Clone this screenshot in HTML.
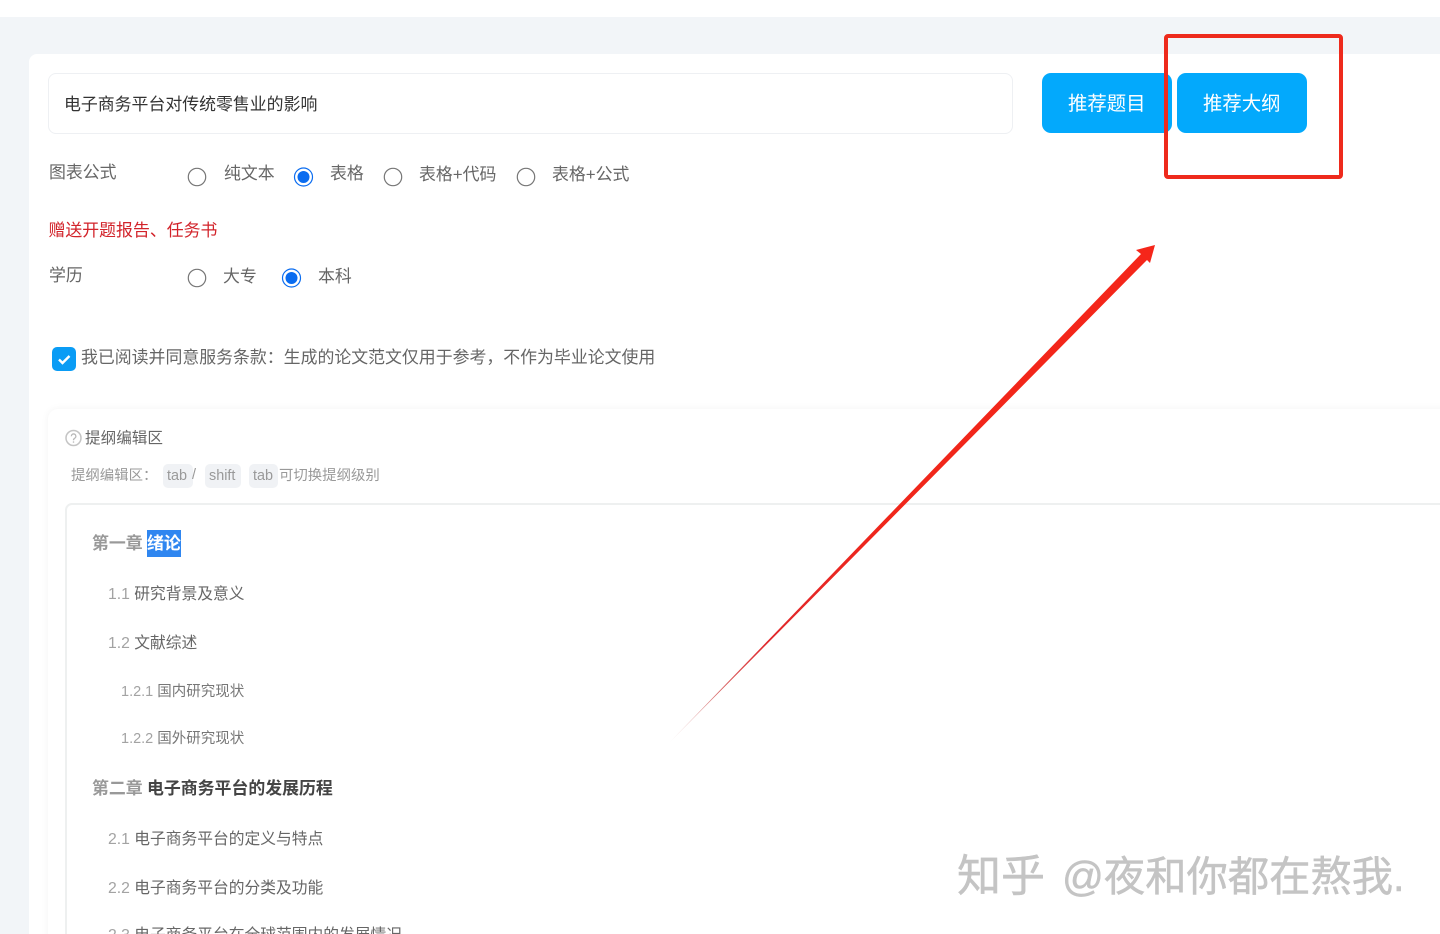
<!DOCTYPE html>
<html lang="zh">
<head>
<meta charset="utf-8">
<title>提纲编辑</title>
<style>
html,body{margin:0;padding:0;width:1440px;height:934px;overflow:hidden;background:#fff}
body{position:relative;font-family:"Liberation Sans","Noto Sans CJK SC",sans-serif;color:#555}
.a{position:absolute;box-sizing:border-box}
.t{position:absolute;white-space:nowrap;line-height:20px;height:20px}
.l{font-size:16.9px;color:#666}
.m{font-size:15.75px;color:#666}
.s{font-size:14.5px;color:#777}
.n{color:#a3a3a3}
.tag{position:absolute;top:464px;height:24px;background:#f0f2f5;border-radius:5px}
.g{font-size:14.4px;color:#999}
.w{height:44px;line-height:44px;color:#c4c4c4;-webkit-text-stroke:.5px #c4c4c4}
</style>
</head>
<body>
<div class="a" style="left:0;top:17px;width:1440px;height:917px;background:#f2f5f8"></div>
<div class="a" style="left:29px;top:54px;width:1411px;height:880px;background:#fff;border-radius:8px 0 0 0"></div>

<div class="a" style="left:48px;top:73px;width:965px;height:61px;border:1px solid #eef0f3;border-radius:8px"></div>
<div class="t" style="left:64px;top:95px;font-size:16.9px;color:#333">电子商务平台对传统零售业的影响</div>

<div class="a" style="left:1042px;top:73px;width:130px;height:60px;background:#03a9fc;border-radius:9px"></div>
<div class="a" style="left:1177px;top:73px;width:130px;height:60px;background:#03a9fc;border-radius:9px"></div>
<div class="t" style="left:1068px;top:94px;font-size:19.4px;color:#fff">推荐题目</div>
<div class="t" style="left:1203px;top:94px;font-size:19.4px;color:#fff">推荐大纲</div>

<div class="t l" style="left:49px;top:163px">图表公式</div>
<div class="t l" style="left:224px;top:164px">纯文本</div>
<div class="t l" style="left:330px;top:164px">表格</div>
<div class="t l" style="left:419px;top:165px">表格+代码</div>
<div class="t l" style="left:552px;top:165px">表格+公式</div>
<div class="t l" style="left:48.500px;top:221px;color:#d2232a">赠送开题报告、任务书</div>
<div class="t l" style="left:49px;top:266px">学历</div>
<div class="t l" style="left:223px;top:267px">大专</div>
<div class="t l" style="left:318px;top:267px">本科</div>
<div class="t l" style="left:81px;top:348px">我已阅读并同意服务条款：生成的论文范文仅用于参考，不作为毕业论文使用</div>

<svg class="a" style="left:0;top:0" width="1440" height="934" viewBox="0 0 1440 934">
  <g fill="none" stroke="#777" stroke-width="1.2">
    <circle cx="197" cy="177" r="8.7"/>
    <circle cx="393" cy="177" r="8.7"/>
    <circle cx="526" cy="177" r="8.7"/>
    <circle cx="197" cy="278" r="8.7"/>
  </g>
  <g fill="#0a6cf0">
    <circle cx="303.500" cy="177" r="6"/>
    <circle cx="291.500" cy="278" r="6"/>
  </g>
  <g fill="none" stroke="#0a6cf0" stroke-width="1.2">
    <circle cx="303.500" cy="177" r="9"/>
    <circle cx="291.500" cy="278" r="9"/>
  </g>
  <rect x="52" y="347" width="24" height="24" rx="5" fill="#0a9cf5"/>
  <path d="M59 359.500l3.500 3.500 7-7" fill="none" stroke="#fff" stroke-width="2.400"/>
</svg>

<div class="a" style="left:48px;top:409px;width:1420px;height:560px;background:#fff;border-radius:10px;box-shadow:0 0 8px rgba(0,0,0,.05)"></div>
<svg class="a" style="left:65px;top:429px" width="18" height="18" viewBox="0 0 18 18">
  <circle cx="8.500" cy="9" r="7.500" fill="none" stroke="#c4c4c4" stroke-width="1.500"/>
  <path d="M6.300 7.200a2.300 2.300 0 1 1 3.500 2c-.9.5-1.300 1-1.300 2" fill="none" stroke="#b8b8b8" stroke-width="1.300"/>
  <circle cx="8.500" cy="13" r=".8" fill="#b8b8b8"/>
</svg>
<div class="t" style="left:85px;top:429px;font-size:15.6px;color:#666">提纲编辑区</div>
<div class="t g" style="left:71px;top:466px">提纲编辑区：</div>
<div class="tag" style="left:163px;width:30px"></div>
<div class="tag" style="left:205px;width:36px"></div>
<div class="tag" style="left:249px;width:29px"></div>
<div class="t g" style="left:167px;top:466px">tab</div>
<div class="t g" style="left:192px;top:465px">/</div>
<div class="t g" style="left:209px;top:466px">shift</div>
<div class="t g" style="left:253px;top:466px">tab</div>
<div class="t g" style="left:279px;top:466px">可切换提纲级别</div>

<div class="a" style="left:65px;top:503px;width:1400px;height:470px;border:2px solid #eef0f0;border-radius:7px"></div>
<div class="a" style="left:147px;top:530px;width:34px;height:27px;background:#2f86f0"></div>
<div class="t" style="left:92px;top:534px;font-size:16.9px;font-weight:700;color:#999">第一章</div>
<div class="t" style="left:147px;top:534px;font-size:16.9px;font-weight:700;color:#fff">绪论</div>
<div class="t m" style="left:108px;top:585px"><span class="n">1.1</span> 研究背景及意义</div>
<div class="t m" style="left:108px;top:634px"><span class="n">1.2</span> 文献综述</div>
<div class="t s" style="left:121px;top:682px"><span class="n">1.2.1</span> 国内研究现状</div>
<div class="t s" style="left:121px;top:729px"><span class="n">1.2.2</span> 国外研究现状</div>
<div class="t" style="left:92px;top:779px;font-size:16.9px;font-weight:700;color:#999">第二章</div>
<div class="t" style="left:147px;top:779px;font-size:16.9px;font-weight:700;color:#444">电子商务平台的发展历程</div>
<div class="t m" style="left:108px;top:830px"><span class="n">2.1</span> 电子商务平台的定义与特点</div>
<div class="t m" style="left:108px;top:879px"><span class="n">2.2</span> 电子商务平台的分类及功能</div>
<div class="t m" style="left:108px;top:926px"><span class="n">2.3</span> 电子商务平台在全球范围内的发展情况</div>

<div class="t w" style="left:957px;top:855px;font-size:44px">知乎</div>
<div class="t w" style="left:1062px;top:855px;font-size:41.300px">@夜和你都在熬我.</div>

<svg class="a" style="left:0;top:0" width="1440" height="934" viewBox="0 0 1440 934">
  <defs>
    <linearGradient id="f" gradientUnits="userSpaceOnUse" x1="670" y1="742" x2="1155" y2="245">
      <stop offset="0" stop-color="#d9a0a0" stop-opacity=".4"/>
      <stop offset=".1" stop-color="#d86a6a"/>
      <stop offset=".2" stop-color="#e0282c"/>
      <stop offset=".45" stop-color="#f0261a"/>
      <stop offset="1" stop-color="#f5261a"/>
    </linearGradient>
  </defs>
  <rect x="1166" y="36" width="175" height="141" rx="2" fill="none" stroke="#ee2a1c" stroke-width="4"/>
  <polygon points="670,742 1141,254 1136,250 1155,245 1150,263 1147,260" fill="url(#f)"/>
</svg>
</body>
</html>
